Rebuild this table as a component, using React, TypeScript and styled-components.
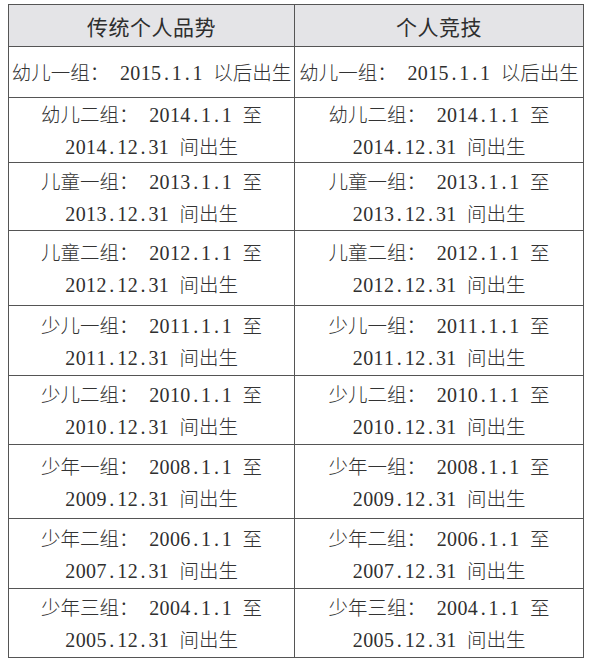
import React from 'react';
import styled, { createGlobalStyle } from 'styled-components';

const GlobalStyle = createGlobalStyle`
  html, body {
    margin: 0;
    padding: 0;
    background: #ffffff;
  }
  body {
    font-family: "Noto Sans CJK SC", "Noto Sans", sans-serif;
    color: #333;
  }
`;

const Page = styled.div`
  padding: 4px 0 0 8px;
`;

const Table = styled.table`
  border-collapse: collapse;
  table-layout: fixed;
  width: 575px;
`;

const Col = styled.col<{ $w: number }>`
  width: ${(p) => p.$w}px;
`;

const Row = styled.tr<{ $h: number }>`
  height: ${(p) => p.$h}px;
`;

const HeadCell = styled.th`
  border: 1.5px solid #555;
  background: #e4e4e7;
  font-size: 21px;
  font-weight: 400;
  letter-spacing: 0.5px;
  color: #2e2e2e;
  text-align: center;
  vertical-align: middle;
  padding: 0;
  height: 40px;
`;

const Cell = styled.td`
  border: 1.5px solid #555;
  text-align: center;
  vertical-align: middle;
  padding: 0 2px;
  font-size: 19.5px;
  font-weight: 300;
  color: #333;
`;

const Line = styled.div`
  height: 32px;
  line-height: 32px;
  white-space: nowrap;
  overflow: visible;
`;

// half-width character in a fixed cell, like the fangsong digits of the scan
const Half = styled.span`
  display: inline-block;
  width: 10.4px;
  text-align: center;
  font-family: "Liberation Serif", serif;
  font-size: 20px;
  line-height: 1;
  color: #2f2f2f;
`;

type Entry = { h: number; lines: string[] };

const rows: Entry[] = [
  { h: 51, lines: ['幼儿一组： 2015.1.1 以后出生'] },
  { h: 65, lines: ['幼儿二组： 2014.1.1 至', '2014.12.31 间出生'] },
  { h: 68, lines: ['儿童一组： 2013.1.1 至', '2013.12.31 间出生'] },
  { h: 75, lines: ['儿童二组： 2012.1.1 至', '2012.12.31 间出生'] },
  { h: 70, lines: ['少儿一组： 2011.1.1 至', '2011.12.31 间出生'] },
  { h: 69, lines: ['少儿二组： 2010.1.1 至', '2010.12.31 间出生'] },
  { h: 74, lines: ['少年一组： 2008.1.1 至', '2009.12.31 间出生'] },
  { h: 70, lines: ['少年二组： 2006.1.1 至', '2007.12.31 间出生'] },
  { h: 69, lines: ['少年三组： 2004.1.1 至', '2005.12.31 间出生'] },
];

const isHalf = (c: string) => /[0-9. ]/.test(c);

// CJK runs stay as text, each half-width char gets its own fixed-width box
const Mixed: React.FC<{ text: string }> = ({ text }) => {
  const parts = text.split(/([0-9. ]+)/).filter(Boolean);
  return (
    <>
      {parts.map((p, i) =>
        isHalf(p[0]) ? (
          Array.from(p).map((c, j) => <Half key={`${i}-${j}`}>{c === ' ' ? '\u00a0' : c}</Half>)
        ) : (
          <span key={i}>{p}</span>
        )
      )}
    </>
  );
};

const Lines: React.FC<{ lines: string[] }> = ({ lines }) => (
  <>
    {lines.map((l, i) => (
      <Line key={i}>
        <Mixed text={l} />
      </Line>
    ))}
  </>
);

export default function App() {
  return (
    <Page>
      <GlobalStyle />
      <Table>
        <colgroup>
          <Col $w={286} />
          <Col $w={289} />
        </colgroup>
        <thead>
          <Row $h={42}>
            <HeadCell>传统个人品势</HeadCell>
            <HeadCell>个人竞技</HeadCell>
          </Row>
        </thead>
        <tbody>
          {rows.map((r, i) => (
            <Row key={i} $h={r.h}>
              <Cell>
                <Lines lines={r.lines} />
              </Cell>
              <Cell>
                <Lines lines={r.lines} />
              </Cell>
            </Row>
          ))}
        </tbody>
      </Table>
    </Page>
  );
}
